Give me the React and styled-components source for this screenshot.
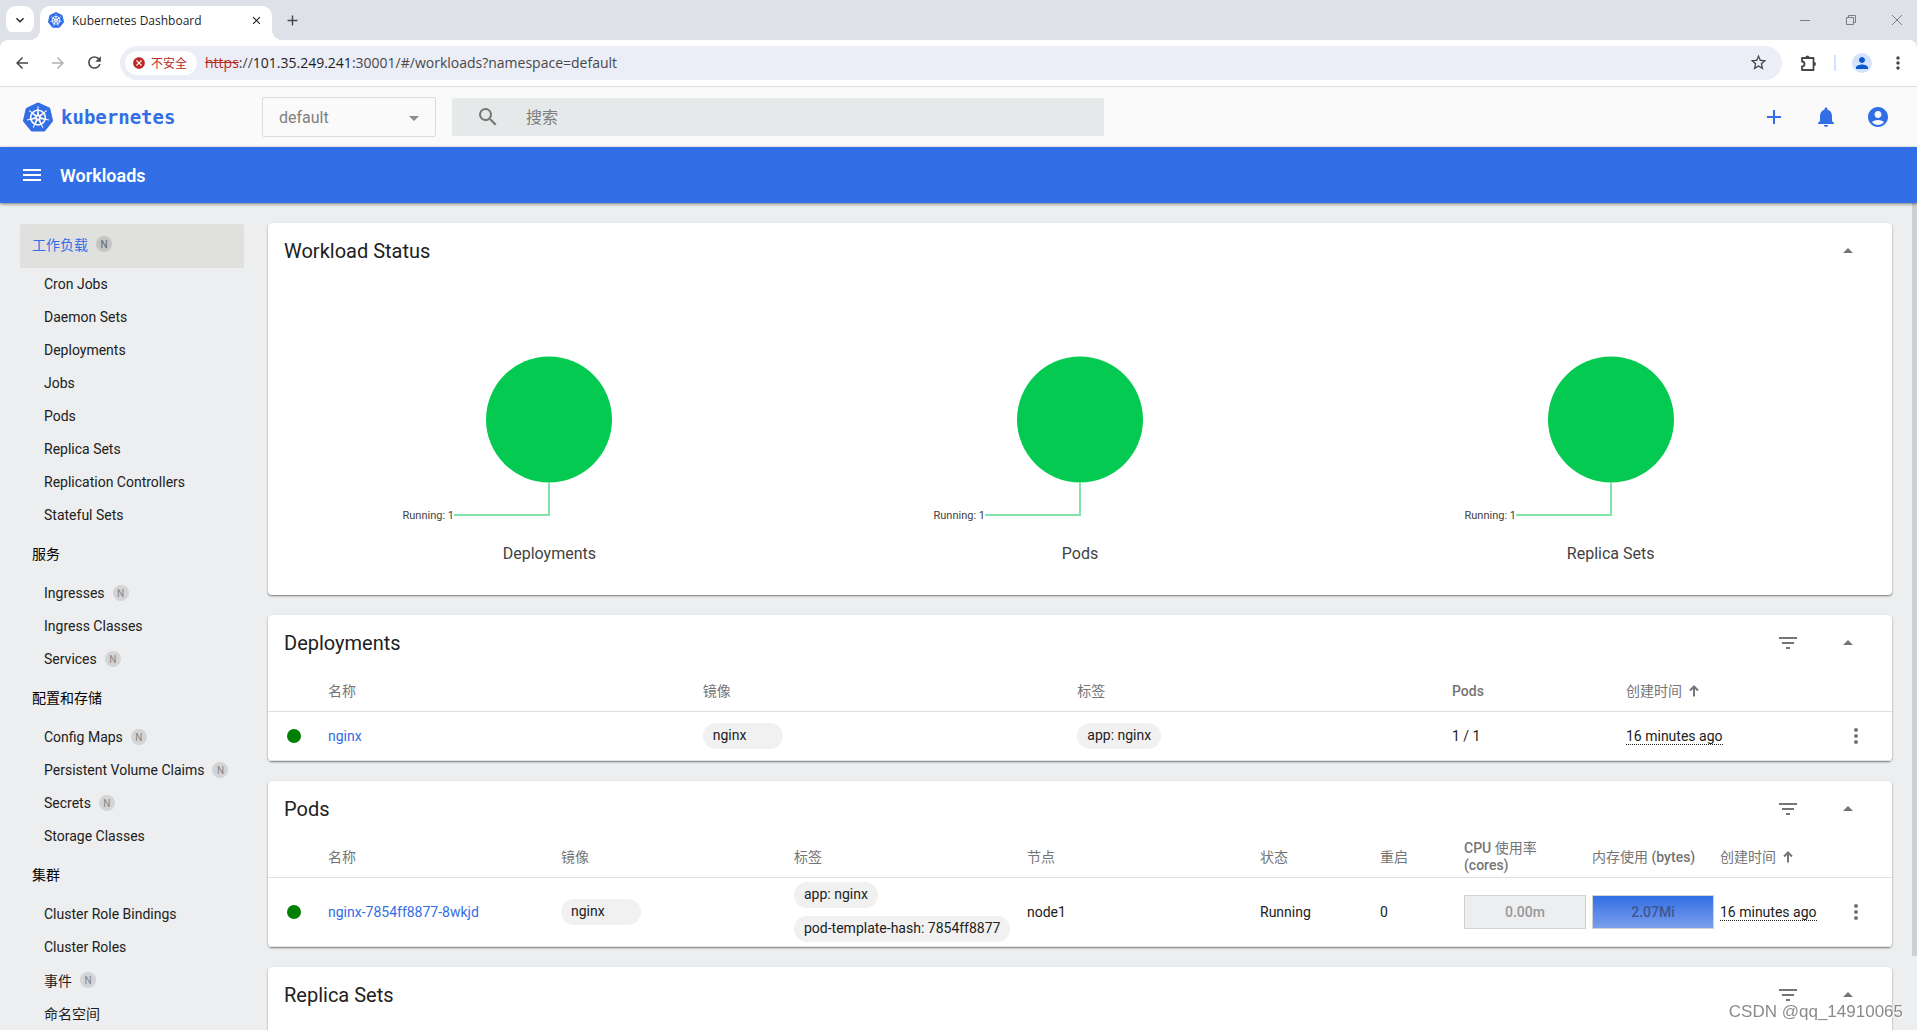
import React from "react";
import styled, { createGlobalStyle } from "styled-components";
import {
  MdAccountCircle,
  MdAdd,
  MdArrowBack,
  MdArrowDropDown,
  MdArrowDropUp,
  MdArrowForward,
  MdCancel,
  MdClose,
  MdFilterList,
  MdKeyboardArrowDown,
  MdMenu,
  MdMoreVert,
  MdNotifications,
  MdPerson,
  MdRefresh,
  MdSearch,
  MdStarBorder,
} from "react-icons/md";
import { SiKubernetes } from "react-icons/si";

const BLUE = "#326ee5";
const GREEN = "#05ca52";

const GlobalStyle = createGlobalStyle`
  * {
    box-sizing: border-box;
  }

  body {
    margin: 0;
    font-family: Roboto, "Noto Sans CJK SC", sans-serif;
    font-size: 14px;
    color: #212121;
  }

  a {
    color: inherit;
    text-decoration: none;
  }

  button,
  input,
  select {
    font: inherit;
    color: inherit;
  }
`;

const Page = styled.div`
  height: 100vh;
  overflow: hidden;
  display: flex;
  flex-direction: column;
  background: #eceeef;
`;

const IconButton = styled.button`
  display: flex;
  align-items: center;
  justify-content: center;
  flex: none;
  width: ${(props) => props.$size}px;
  height: ${(props) => props.$size}px;
  padding: 0;
  border: 0;
  background: none;
  color: ${(props) => props.$color || "#757575"};
`;

/* browser window */

const TabStrip = styled.div`
  display: flex;
  align-items: flex-start;
  flex: none;
  height: 40px;
  padding: 6px 6px 0;
  background: #dee2e8;
  font-family: "Open Sans", "Noto Sans CJK SC", sans-serif;
`;

const TabSearch = styled(IconButton)`
  background: #fff;
  border-radius: 10px;
  margin-right: 6px;
`;

const Tab = styled.div`
  position: relative;
  display: flex;
  align-items: center;
  width: 232px;
  height: 34px;
  padding: 0 8px 6px;
  border-radius: 10px 10px 0 0;
  background: #fff;
  font-size: 12px;
  color: #1f1f1f;

  &::before,
  &::after {
    content: "";
    position: absolute;
    bottom: 0;
    width: 10px;
    height: 10px;
  }

  &::before {
    right: 100%;
    background: radial-gradient(circle at 0 0, transparent 10px, #fff 10px);
  }

  &::after {
    left: 100%;
    background: radial-gradient(circle at 100% 0, transparent 10px, #fff 10px);
  }
`;

const TabTitle = styled.span`
  flex: 1;
  padding-left: 8px;
  white-space: nowrap;
`;

const NewTab = styled(IconButton)`
  margin-left: 6px;
`;

const WindowButtons = styled.div`
  display: flex;
  gap: 18px;
  margin-left: auto;
`;

const BrowserBar = styled.div`
  display: flex;
  align-items: center;
  flex: none;
  height: 47px;
  padding: 0 5px 1px 8px;
  background: #fff;
  border-bottom: 1px solid #dedede;
  border-radius: 8px 8px 0 0;
  box-shadow: 0 -8px 0 #dee2e8;
  font-family: "Open Sans", "Noto Sans CJK SC", sans-serif;
`;

const NavButtons = styled.div`
  display: flex;
  gap: 8px;
  margin-right: 12px;
`;

const AddressBar = styled.div`
  display: flex;
  align-items: center;
  flex: 1;
  height: 34px;
  padding: 0 10px 0 5px;
  border-radius: 17px;
  background: #ebeef7;
`;

const Insecure = styled.span`
  display: flex;
  align-items: center;
  gap: 5px;
  height: 24px;
  padding: 0 10px 0 7px;
  border-radius: 12px;
  background: #fff;
  color: #b92b24;
  font-size: 12px;
`;

const Url = styled.span`
  flex: 1;
  padding-left: 8px;
  font-size: 14px;
  color: #474747;

  s {
    color: #b92b24;
  }

  b {
    font-weight: 400;
    color: #1f1f1f;
  }
`;

const BrowserTools = styled.div`
  display: flex;
  align-items: center;
  gap: 12px;
  margin-left: 12px;
`;

const Separator = styled.span`
  width: 2px;
  height: 16px;
  background: #d3e3fd;
`;

const Avatar = styled(IconButton)`
  border-radius: 50%;
  background: #d3e3fd;
  margin-left: 4px;
`;

/* dashboard header */

const Header = styled.header`
  display: flex;
  align-items: center;
  flex: none;
  height: 60px;
  padding: 0 27px 0 23px;
  background: #fafafa;
`;

const Logo = styled.a`
  display: flex;
  align-items: center;
  gap: 8px;
  width: 239px;
  font-family: "DejaVu Sans Mono", monospace;
  font-size: 19px;
  font-weight: 700;

  && {
    color: ${BLUE};
  }
`;

const NamespaceField = styled.div`
  position: relative;
  width: 174px;
  margin-right: 16px;

  select {
    width: 100%;
    height: 40px;
    padding: 0 16px;
    border: 1px solid #dcdcdc;
    border-radius: 2px;
    background: transparent;
    appearance: none;
    font-size: 16px;
    color: #808080;
  }

  svg {
    position: absolute;
    right: 10px;
    top: 9px;
    color: #8c8c8c;
    pointer-events: none;
  }
`;

const SearchField = styled.label`
  display: flex;
  align-items: center;
  gap: 26px;
  flex: 0 1 652px;
  height: 38px;
  padding: 0 24px;
  border-radius: 2px;
  background: #e6e9ea;
  color: #757575;

  input {
    flex: 1;
    border: 0;
    padding: 0;
    background: none;
    font-size: 16px;
    outline: none;
  }

  input::placeholder {
    color: #7d7d7d;
  }
`;

const HeaderActions = styled.div`
  display: flex;
  gap: 28px;
  margin-left: auto;
`;

const ActionBar = styled.div`
  position: relative;
  display: flex;
  align-items: center;
  gap: 16px;
  flex: none;
  height: 56px;
  padding: 0 20px;
  background: ${BLUE};
  color: #fff;
  box-shadow: 0 1px 3px rgba(0, 0, 0, 0.5);

  h1 {
    margin: 0;
    font-size: 18px;
    font-weight: 600;
  }
`;

/* page body */

const Content = styled.div`
  display: flex;
  flex: 1;
  min-height: 0;
`;

const Sidebar = styled.nav`
  display: flex;
  flex-direction: column;
  flex: none;
  width: 268px;
  padding: 20px 24px 0 20px;
`;

const NavHeading = styled.a`
  display: flex;
  align-items: center;
  gap: 8px;
  flex: none;
  height: 44px;
  margin-top: 1px;
  padding: 0 12px 4px;
  border-radius: 2px;
  background: ${(props) => (props.$active ? "#e0e0df" : "none")};

  && {
    color: ${(props) => (props.$active ? BLUE : "#000")};
  }
`;

const NavItem = styled.a`
  display: flex;
  align-items: center;
  gap: 8px;
  flex: none;
  height: 33px;
  padding: 0 0 2px 24px;
`;

const Badge = styled.span`
  width: 16px;
  height: 16px;
  border-radius: 50%;
  background: ${(props) => (props.$active ? "#c4c4c3" : "#d3d4d5")};
  color: ${(props) => (props.$active ? "#666" : "#858585")};
  font-size: 10px;
  line-height: 17px;
  text-align: center;
`;

const Main = styled.main`
  display: flex;
  flex-direction: column;
  gap: 20px;
  flex: 1;
  min-width: 0;
  padding: 20px 20px 0 0;
`;

const ScrollTrack = styled.div`
  flex: none;
  width: 5px;
`;

const ScrollThumb = styled.div`
  height: 91%;
  background: #cfd0d1;
`;

const CardBox = styled.section`
  flex: none;
  border-radius: 4px;
  background: #fff;
  box-shadow: 0 1px 2px rgba(0, 0, 0, 0.5);
`;

const CardHeader = styled.div`
  display: flex;
  align-items: center;
  gap: 20px;
  height: 56px;
  padding: 0 24px 0 16px;

  h2 {
    flex: 1;
    margin: 0;
    font-size: 20px;
    font-weight: 400;
  }
`;

const Charts = styled.div`
  display: grid;
  grid-template-columns: repeat(3, 1fr);
  padding: 0 16px 29px;
`;

const Chart = styled.figure`
  margin: 0;
  text-align: center;

  svg {
    display: block;
    margin: 0 auto;
  }

  figcaption {
    font-size: 16px;
    line-height: 24px;
    color: #424242;
  }
`;

const Table = styled.table`
  width: 100%;
  table-layout: fixed;
  border-collapse: separate;
  border-spacing: 0;

  th,
  td {
    padding: 0 6px 0 0;
    text-align: left;
  }

  th {
    height: 41px;
    border-bottom: 1px solid #dedede;
    font-weight: 500;
    line-height: 17px;
    color: #757575;
    white-space: nowrap;
  }

  td {
    height: 49px;
    border-bottom: 1px solid #e3e3e3;
    white-space: nowrap;
  }

  tr > :first-child {
    padding-left: 19px;
  }

  tr > :last-child {
    padding: 0;
  }
`;

const Cjk = styled.span`
  font-weight: 400;
`;

const Sortable = styled.span`
  display: flex;
  align-items: center;
  gap: 7px;
  font-weight: 400;
`;

const StatusDot = styled.span`
  display: block;
  width: 14px;
  height: 14px;
  border-radius: 50%;
  background: #008000;
`;

const ResourceLink = styled.a`
  && {
    color: ${BLUE};
  }
`;

const Chips = styled.div`
  display: flex;
  flex-direction: column;
  align-items: flex-start;
  gap: 8px;
  padding: 4px 0;
`;

const Chip = styled.span`
  min-width: 80px;
  height: 26px;
  padding: 0 10px;
  border-radius: 13px;
  background: #f1f1f1;
  line-height: 25px;
`;

const Age = styled.span`
  border-bottom: 1px dotted #212121;
`;

const Usage = styled.div`
  height: 34px;
  border: 1px solid #cfd1d2;
  background: ${(props) =>
    props.$filled ? `linear-gradient(${BLUE}, #7b9fec)` : "#eceeef"};
  color: ${(props) => (props.$filled ? "#3d5890" : "#97989a")};
  font-weight: 500;
  line-height: 32px;
  text-align: center;
`;

const RowMenu = styled(IconButton)`
  margin-left: 4px;
`;

const ClippedCard = styled(CardBox)`
  min-height: 146px;
`;

const Watermark = styled.div`
  position: fixed;
  right: 14px;
  bottom: 8px;
  font-family: "Liberation Sans", sans-serif;
  font-size: 17px;
  color: #8b8b8b;
  text-shadow: 1px 1px 0 #fff;
`;

const navigation = [
  {
    title: "工作负载",
    badge: true,
    active: true,
    items: [
      ["Cron Jobs"],
      ["Daemon Sets"],
      ["Deployments"],
      ["Jobs"],
      ["Pods"],
      ["Replica Sets"],
      ["Replication Controllers"],
      ["Stateful Sets"],
    ],
  },
  {
    title: "服务",
    items: [["Ingresses", true], ["Ingress Classes"], ["Services", true]],
  },
  {
    title: "配置和存储",
    items: [
      ["Config Maps", true],
      ["Persistent Volume Claims", true],
      ["Secrets", true],
      ["Storage Classes"],
    ],
  },
  {
    title: "集群",
    items: [
      ["Cluster Role Bindings"],
      ["Cluster Roles"],
      ["事件", true],
      ["命名空间"],
    ],
  },
];

const WindowIcon = ({ d }) => (
  <svg width="10" height="10" viewBox="0 0 10 10" fill="none" stroke="#7c7f83">
    <path d={d} />
  </svg>
);

const PuzzleIcon = () => (
  <svg width="18" height="18" viewBox="0 0 18 18" fill="currentColor">
    <path
      d="M3 4h11.5v12H3v-3.500a2.5 2.5 0 0 0 0-5z"
      fill="none"
      stroke="currentColor"
      strokeWidth="1.8"
      strokeLinejoin="round"
    />
    <path d="M6.5 3.500a2 2 0 0 1 4 0zM15 8a2 2 0 0 1 0 4z" />
  </svg>
);

const SortArrow = () => (
  <svg
    width="10"
    height="12"
    viewBox="0 0 10 12"
    fill="none"
    stroke="currentColor"
    strokeWidth="2"
  >
    <path d="M5 11.500V1.500M1 5.500l4-4 4 4" />
  </svg>
);

const Browser = () => (
  <>
    <TabStrip>
      <TabSearch $size={28} $color="#1f1f1f" aria-label="Search tabs">
        <MdKeyboardArrowDown size={16} />
      </TabSearch>
      <Tab>
        <SiKubernetes size={16} color={BLUE} />
        <TabTitle>Kubernetes Dashboard</TabTitle>
        <IconButton $size={16} $color="#1f1f1f" aria-label="Close tab">
          <MdClose size={13} />
        </IconButton>
      </Tab>
      <NewTab $size={28} $color="#474747" aria-label="New tab">
        <MdAdd size={17} />
      </NewTab>
      <WindowButtons>
        <IconButton $size={28} aria-label="Minimize">
          <WindowIcon d="M0 5.500h10" />
        </IconButton>
        <IconButton $size={28} aria-label="Restore">
          <WindowIcon d="M.5 2.500h7v7h-7zM2.500 2.500v-2h7v7h-2" />
        </IconButton>
        <IconButton $size={28} aria-label="Close">
          <WindowIcon d="M0 0l10 10M10 0L0 10" />
        </IconButton>
      </WindowButtons>
    </TabStrip>
    <BrowserBar>
      <NavButtons>
        <IconButton $size={28} $color="#474747" aria-label="Back">
          <MdArrowBack size={18} />
        </IconButton>
        <IconButton $size={28} $color="#b0b0b0" aria-label="Forward">
          <MdArrowForward size={18} />
        </IconButton>
        <IconButton $size={28} $color="#474747" aria-label="Reload">
          <MdRefresh size={19} />
        </IconButton>
      </NavButtons>
      <AddressBar>
        <Insecure>
          <MdCancel size={14} />
          不安全
        </Insecure>
        <Url>
          <s>https</s>://<b>101.35.249.241</b>
          :30001/#/workloads?namespace=default
        </Url>
        <IconButton $size={28} $color="#474747" aria-label="Bookmark">
          <MdStarBorder size={19} />
        </IconButton>
      </AddressBar>
      <BrowserTools>
        <IconButton $size={28} $color="#474747" aria-label="Extensions">
          <PuzzleIcon />
        </IconButton>
        <Separator />
        <Avatar $size={20} $color="#0b57d0" aria-label="Profile">
          <MdPerson size={18} />
        </Avatar>
        <IconButton $size={28} $color="#474747" aria-label="Menu">
          <MdMoreVert size={20} />
        </IconButton>
      </BrowserTools>
    </BrowserBar>
  </>
);

const CollapseButton = () => (
  <IconButton $size={40} aria-label="Collapse">
    <MdArrowDropUp size={24} />
  </IconButton>
);

const ListHeader = ({ title }) => (
  <CardHeader>
    <h2>{title}</h2>
    <IconButton $size={40} aria-label="Filter">
      <MdFilterList size={24} />
    </IconButton>
    <CollapseButton />
  </CardHeader>
);

const StatusChart = ({ name, running }) => (
  <Chart>
    <svg width="400" height="263" viewBox="0 0 400 263">
      <circle cx="200" cy="140.5" r="63" fill={GREEN} />
      <path
        d="M200 204v32h-95"
        fill="none"
        stroke={GREEN}
        strokeWidth="2"
        opacity="0.5"
      />
      <text x="105" y="240" textAnchor="end" fontSize="11" fill="#424242">
        Running: {running}
      </text>
    </svg>
    <figcaption>{name}</figcaption>
  </Chart>
);

const Columns = ({ widths }) => (
  <colgroup>
    {widths.map((width, i) => (
      <col key={i} width={width || undefined} />
    ))}
  </colgroup>
);

const CreatedHeader = () => (
  <th>
    <Sortable>
      创建时间
      <SortArrow />
    </Sortable>
  </th>
);

const MenuCell = () => (
  <td>
    <RowMenu $size={40} aria-label="Actions">
      <MdMoreVert size={24} />
    </RowMenu>
  </td>
);

const Deployments = () => (
  <CardBox>
    <ListHeader title="Deployments" />
    <Table>
      <Columns widths={[60, 0, 0, 0, 174, 206, 60]} />
      <thead>
        <tr>
          <th />
          <th><Cjk>名称</Cjk></th>
          <th><Cjk>镜像</Cjk></th>
          <th><Cjk>标签</Cjk></th>
          <th>Pods</th>
          <CreatedHeader />
          <th />
        </tr>
      </thead>
      <tbody>
        <tr>
          <td><StatusDot /></td>
          <td><ResourceLink href="#nginx">nginx</ResourceLink></td>
          <td><Chips><Chip>nginx</Chip></Chips></td>
          <td><Chips><Chip>app: nginx</Chip></Chips></td>
          <td>1 / 1</td>
          <td><Age>16 minutes ago</Age></td>
          <MenuCell />
        </tr>
      </tbody>
    </Table>
  </CardBox>
);

const Pods = () => (
  <CardBox>
    <ListHeader title="Pods" />
    <Table>
      <Columns widths={[60, 0, 0, 0, 0, 120, 84, 128, 128, 112, 60]} />
      <thead>
        <tr>
          <th />
          <th><Cjk>名称</Cjk></th>
          <th><Cjk>镜像</Cjk></th>
          <th><Cjk>标签</Cjk></th>
          <th><Cjk>节点</Cjk></th>
          <th><Cjk>状态</Cjk></th>
          <th><Cjk>重启</Cjk></th>
          <th>
            CPU <Cjk>使用率</Cjk>
            <br />
            (cores)
          </th>
          <th><Cjk>内存使用</Cjk> (bytes)</th>
          <CreatedHeader />
          <th />
        </tr>
      </thead>
      <tbody>
        <tr>
          <td><StatusDot /></td>
          <td>
            <ResourceLink href="#nginx-7854ff8877-8wkjd">
              nginx-7854ff8877-8wkjd
            </ResourceLink>
          </td>
          <td><Chips><Chip>nginx</Chip></Chips></td>
          <td>
            <Chips>
              <Chip>app: nginx</Chip>
              <Chip>pod-template-hash: 7854ff8877</Chip>
            </Chips>
          </td>
          <td>node1</td>
          <td>Running</td>
          <td>0</td>
          <td><Usage>0.00m</Usage></td>
          <td><Usage $filled>2.07Mi</Usage></td>
          <td><Age>16 minutes ago</Age></td>
          <MenuCell />
        </tr>
      </tbody>
    </Table>
  </CardBox>
);

const App = () => {
  return (
    <Page>
      <GlobalStyle />
      <Browser />
      <Header>
        <Logo href="#home">
          <SiKubernetes size={30} />
          kubernetes
        </Logo>
        <NamespaceField>
          <select aria-label="Namespace" defaultValue="default">
            <option>default</option>
          </select>
          <MdArrowDropDown size={24} />
        </NamespaceField>
        <SearchField>
          <MdSearch size={24} />
          <input type="text" placeholder="搜索" aria-label="搜索" />
        </SearchField>
        <HeaderActions>
          <IconButton $size={24} $color={BLUE} aria-label="Create">
            <MdAdd size={24} />
          </IconButton>
          <IconButton $size={24} $color={BLUE} aria-label="Notifications">
            <MdNotifications size={24} />
          </IconButton>
          <IconButton $size={24} $color={BLUE} aria-label="Account">
            <MdAccountCircle size={24} />
          </IconButton>
        </HeaderActions>
      </Header>
      <ActionBar>
        <IconButton $size={24} $color="#fff" aria-label="Toggle navigation">
          <MdMenu size={26} />
        </IconButton>
        <h1>Workloads</h1>
      </ActionBar>
      <Content>
        <Sidebar>
          {navigation.map((group) => (
            <React.Fragment key={group.title}>
              <NavHeading href={`#${group.title}`} $active={group.active}>
                {group.title}
                {group.badge && <Badge $active>N</Badge>}
              </NavHeading>
              {group.items.map(([label, badge]) => (
                <NavItem key={label} href={`#${label}`}>
                  {label}
                  {badge && <Badge>N</Badge>}
                </NavItem>
              ))}
            </React.Fragment>
          ))}
        </Sidebar>
        <Main>
          <CardBox>
            <CardHeader>
              <h2>Workload Status</h2>
              <CollapseButton />
            </CardHeader>
            <Charts>
              <StatusChart name="Deployments" running={1} />
              <StatusChart name="Pods" running={1} />
              <StatusChart name="Replica Sets" running={1} />
            </Charts>
          </CardBox>
          <Deployments />
          <Pods />
          <ClippedCard>
            <ListHeader title="Replica Sets" />
          </ClippedCard>
        </Main>
        <ScrollTrack>
          <ScrollThumb />
        </ScrollTrack>
      </Content>
      <Watermark>CSDN @qq_14910065</Watermark>
    </Page>
  );
};

export default App;
